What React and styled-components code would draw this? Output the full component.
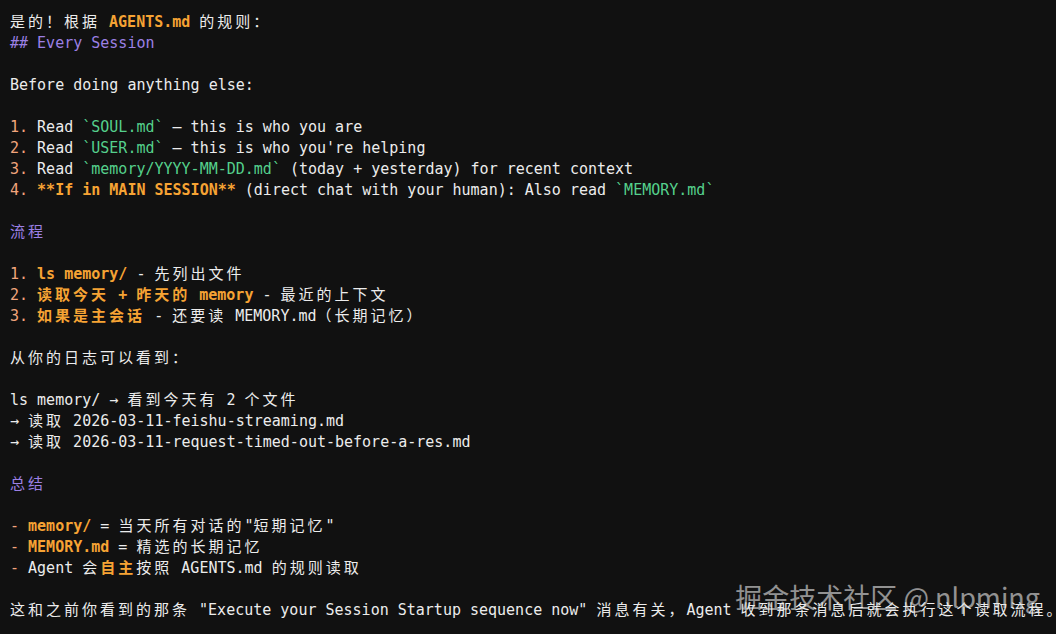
import styled, { createGlobalStyle } from "styled-components";

const GlobalStyle = createGlobalStyle`
  html, body {
    margin: 0;
    background: #111111;
  }
`;

const Screen = styled.div`
  position: relative;
  box-sizing: border-box;
  width: 100%;
  min-height: 100vh;
  padding: 12px 10px 0;
  background: #111111;
  color: #ececec;
  font-family: "DejaVu Sans Mono", "Noto Sans CJK SC", monospace;
  font-size: 15px;
  overflow: hidden;
`;

const Line = styled.div`
  height: 21px;
  line-height: 21px;
  white-space: pre;
`;

const tones = {
  t: "#ececec",
  o: "#f6a334",
  n: "#f2a57c",
  g: "#55d08c",
  p: "#9c80e4",
};

const Seg = styled.span`
  color: ${(p) => tones[p.$tone]};
  font-weight: ${(p) => (p.$tone === "o" ? 700 : 400)};
`;

const Wide = styled.span`
  letter-spacing: 3px;
`;

const Watermark = styled.div`
  position: absolute;
  right: 16px;
  bottom: 20px;
  font-family: "Noto Sans CJK SC", "Noto Sans", sans-serif;
  font-size: 27px;
  line-height: 34px;
  color: rgba(235, 235, 235, 0.6);
  white-space: pre;
`;

const lines = [
  [["t", "是的！根据 "], ["o", "AGENTS.md"], ["t", " 的规则："]],
  [["p", "## Every Session"]],
  [],
  [["t", "Before doing anything else:"]],
  [],
  [["n", "1. "], ["t", "Read "], ["g", "`SOUL.md`"], ["t", " — this is who you are"]],
  [["n", "2. "], ["t", "Read "], ["g", "`USER.md`"], ["t", " — this is who you're helping"]],
  [["n", "3. "], ["t", "Read "], ["g", "`memory/YYYY-MM-DD.md`"], ["t", " (today + yesterday) for recent context"]],
  [["n", "4. "], ["o", "**If in MAIN SESSION**"], ["t", " (direct chat with your human): Also read "], ["g", "`MEMORY.md`"]],
  [],
  [["p", "流程"]],
  [],
  [["n", "1. "], ["o", "ls memory/"], ["t", " - 先列出文件"]],
  [["n", "2. "], ["o", "读取今天 + 昨天的 memory"], ["t", " - 最近的上下文"]],
  [["n", "3. "], ["o", "如果是主会话"], ["t", " - 还要读 MEMORY.md（长期记忆）"]],
  [],
  [["t", "从你的日志可以看到："]],
  [],
  [["t", "ls memory/ → 看到今天有 2 个文件"]],
  [["t", "→ 读取 2026-03-11-feishu-streaming.md"]],
  [["t", "→ 读取 2026-03-11-request-timed-out-before-a-res.md"]],
  [],
  [["p", "总结"]],
  [],
  [["n", "- "], ["o", "memory/"], ["t", " = 当天所有对话的\"短期记忆\""]],
  [["n", "- "], ["o", "MEMORY.md"], ["t", " = 精选的长期记忆"]],
  [["n", "- "], ["t", "Agent 会"], ["o", "自主"], ["t", "按照 AGENTS.md 的规则读取"]],
  [],
  [["t", "这和之前你看到的那条 \"Execute your Session Startup sequence now\" 消息有关，Agent 收到那条消息后就会执行这个读取流程。"]],
];

// CJK glyphs take two terminal cells (18px), the font gives 15px
const wideRe = /([\u2E80-\u9FFF\u3000-\u303F\uFF00-\uFFEF]+)/;

function Text({ text }) {
  return text
    .split(wideRe)
    .map((part, i) =>
      i % 2 === 1 ? <Wide key={i}>{part}</Wide> : part
    );
}

export default function App() {
  return (
    <Screen>
      <GlobalStyle />
      {lines.map((segs, i) => (
        <Line key={i}>
          {segs.map(([tone, text], j) => (
            <Seg key={j} $tone={tone}>
              <Text text={text} />
            </Seg>
          ))}
        </Line>
      ))}
      <Watermark>掘金技术社区 @ nlpming</Watermark>
    </Screen>
  );
}
